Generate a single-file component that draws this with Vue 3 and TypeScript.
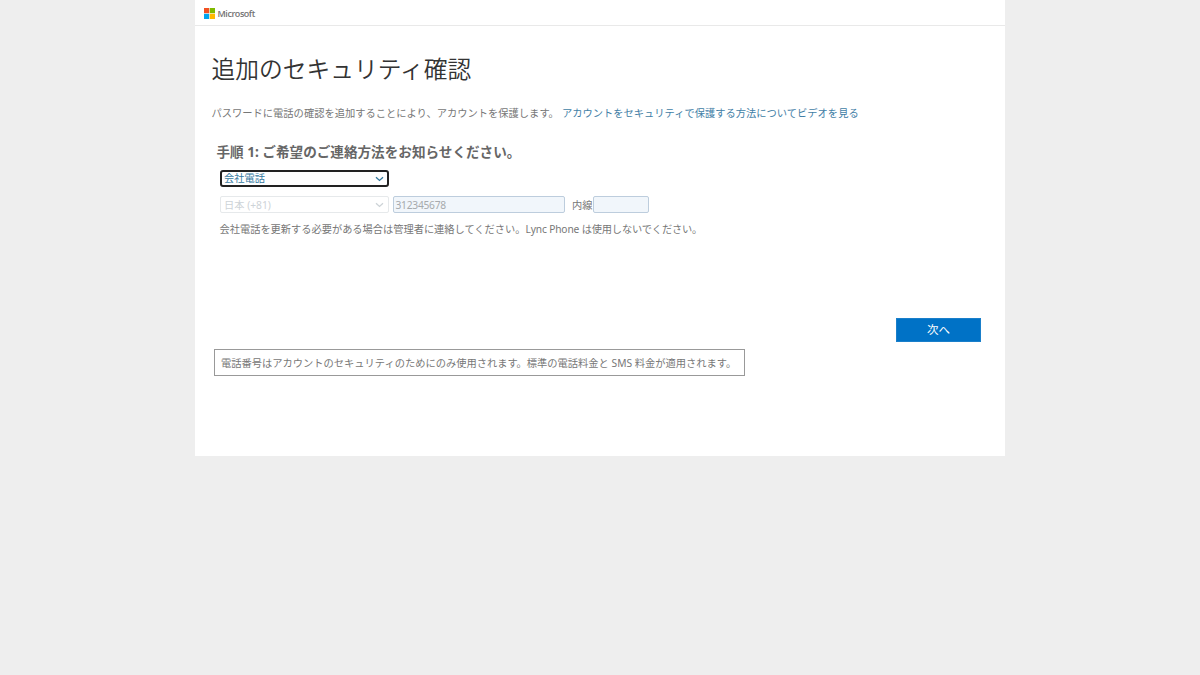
<script setup lang="ts">
import { ref } from 'vue'

const method = ref('会社電話')
const country = ref('日本 (+81)')
const phone = ref('312345678')
const extension = ref('')
</script>

<template>
  <div class="page">
    <main class="panel">
      <header class="brand">
        <svg class="logo" viewBox="0 0 11 11" aria-hidden="true">
          <rect width="5.2" height="5.2" fill="#f25022" />
          <rect x="5.8" width="5.2" height="5.2" fill="#7fba00" />
          <rect y="5.8" width="5.2" height="5.2" fill="#00a4ef" />
          <rect x="5.8" y="5.8" width="5.2" height="5.2" fill="#ffb900" />
        </svg>
        <span class="brand-name">Microsoft</span>
      </header>

      <h1>追加のセキュリティ確認</h1>
      <p class="intro">
        <span>パスワードに電話の確認を追加することにより、アカウントを保護します。</span>
        <a>アカウントをセキュリティで保護する方法についてビデオを見る</a>
      </p>

      <h2>手順 1: ご希望のご連絡方法をお知らせください。</h2>

      <div class="select active">
        <span>{{ method }}</span>
        <svg class="chevron" viewBox="0 0 9 6"><path d="M1 1.2 4.5 4.4 8 1.2" /></svg>
      </div>

      <div class="row">
        <div class="select disabled">
          <span>{{ country }}</span>
          <svg class="chevron" viewBox="0 0 9 6"><path d="M1 1.2 4.5 4.4 8 1.2" /></svg>
        </div>
        <div class="field phone">{{ phone }}</div>
        <span class="ext-label">内線</span>
        <div class="field ext">{{ extension }}</div>
      </div>

      <p class="help">会社電話を更新する必要がある場合は管理者に連絡してください。<span class="help-tail">Lync Phone は使用しないでください。</span></p>

      <div class="actions"><button type="button">次へ</button></div>

      <p class="note">電話番号はアカウントのセキュリティのためにのみ使用されます。標準の電話料金と SMS 料金が適用されます。</p>
    </main>
  </div>
</template>

<style>
body {
  margin: 0;
  background: #eee;
}
</style>

<style scoped>
* {
  box-sizing: border-box;
}

.page {
  min-height: 675px;
  background: #eee;
  font-family: "Noto Sans", "Noto Sans CJK JP", sans-serif;
  font-size: 10.24px;
  line-height: 16px;
  color: #777;
  white-space: nowrap;
}

.panel {
  width: 810px;
  height: 456px;
  margin: 0 auto;
  background: #fff;
  overflow: hidden;
}

.brand {
  display: flex;
  align-items: center;
  height: 26px;
  padding: 1px 0 0 9px;
  border-bottom: 1px solid #e9e9e9;
}

.logo {
  width: 11px;
  height: 11px;
  margin-right: 2.5px;
}

.brand-name {
  padding-top: 1px;
  font-family: "Open Sans", "Noto Sans", sans-serif;
  font-size: 9px;
  font-weight: 600;
  letter-spacing: -0.45px;
  color: #737373;
}

h1 {
  height: 36px;
  margin: 25px 0 0 16.5px;
  font-size: 23.75px;
  font-weight: 350;
  line-height: 36px;
  color: #333;
}

.intro {
  display: flex;
  gap: 3px;
  height: 16px;
  margin: 18px 0 0 16.5px;
  font-size: 10.27px;
}

.intro a {
  color: #3f7ea6;
}

h2 {
  height: 20px;
  margin: 21px 0 0 21.5px;
  font-size: 13.6px;
  font-weight: 700;
  line-height: 20px;
  color: #666;
}

.select {
  display: flex;
  align-items: center;
  justify-content: space-between;
  width: 169px;
  height: 17px;
  padding: 0 4px 0 3px;
  border: 1px solid #e6e9eb;
  border-radius: 2px;
  background: #fff;
}

.active {
  margin: 8px 0 0 25px;
  border: 2px solid #222;
  border-radius: 3px;
  padding: 0 3px 0 2px;
  line-height: 13px;
  color: #34799f;
}

.active span {
  margin-top: -1px;
}

.disabled {
  color: #cdd3d7;
}

.chevron {
  width: 9px;
  height: 6px;
  fill: none;
  stroke: currentColor;
  stroke-width: 1.3;
}

.row {
  display: flex;
  align-items: center;
  margin: 9px 0 0 25px;
}

.field {
  height: 17px;
  border: 1px solid #bdcddd;
  border-radius: 2px;
  background: #f1f6fb;
  color: #a6aaad;
  line-height: 16px;
}

.phone {
  width: 172px;
  margin-left: 4px;
  padding-left: 1.5px;
  letter-spacing: -0.25px;
}

.ext-label {
  margin-left: 7px;
}

.ext {
  width: 56px;
  margin-left: 1px;
}

.help {
  height: 16px;
  margin: 8px 0 0 24.5px;
  font-size: 10.22px;
}

.help-tail {
  letter-spacing: -0.15px;
}

.actions {
  display: flex;
  justify-content: flex-end;
  margin: 81px 24px 0 0;
}

button {
  width: 85px;
  height: 24px;
  padding: 0;
  border: 1px solid #1a7fca;
  background: #0072c6;
  color: #fff;
  font-family: inherit;
  font-size: 11.5px;
  font-weight: 400;
  line-height: 22px;
}

.note {
  width: 531px;
  height: 27px;
  margin: 7px 0 0 19px;
  padding-left: 6px;
  border: 1px solid #999;
  font-size: 10.26px;
  line-height: 26px;
}
</style>
